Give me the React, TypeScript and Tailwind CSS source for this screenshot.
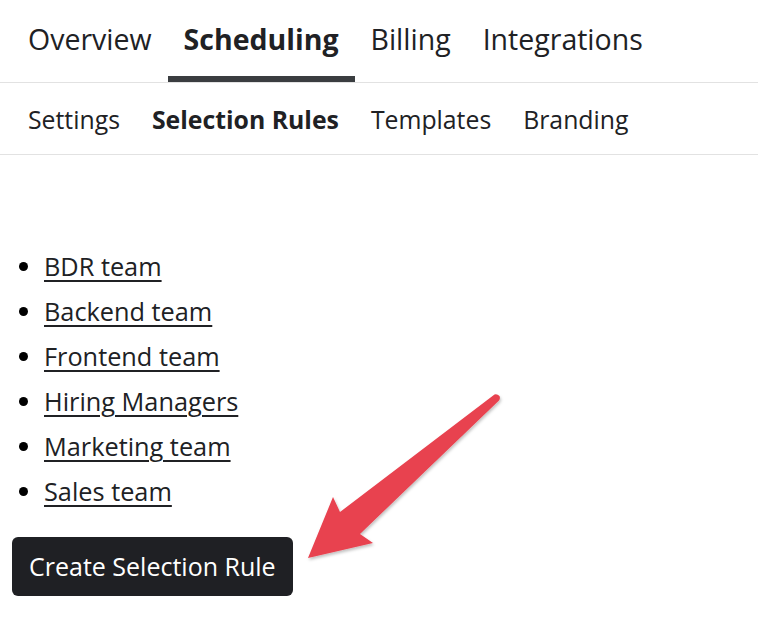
import React from "react";

const topTabs = ["Overview", "Scheduling", "Billing", "Integrations"];
const subTabs = ["Settings", "Selection Rules", "Templates", "Branding"];
const rules = ["BDR team", "Backend team", "Frontend team", "Hiring Managers", "Marketing team", "Sales team"];

export default function App() {
  return (
    <div
      className="relative h-[626px] w-[758px] overflow-hidden bg-white text-[#202124]"
      style={{ fontFamily: "'Open Sans', 'Noto Sans', sans-serif" }}
    >
      {/* main tabs */}
      <div className="flex h-[83px] border-b border-[#e2e2e2] px-3">
        {topTabs.map((t) => {
          const active = t === "Scheduling";
          return (
            <div
              key={t}
              className={
                "flex h-full items-start px-4 pt-[19px] text-[28.5px] leading-[40px] " +
                (active ? "border-b-[6px] border-[#3a3d40] font-bold text-[28.3px]" : "")
              }
            >
              {t}
            </div>
          );
        })}
      </div>

      {/* sub tabs */}
      <div className="flex h-[72px] items-center border-b border-[#e2e2e2] px-3">
        {subTabs.map((t) => (
          <div
            key={t}
            className={"px-4 text-[24.8px] leading-[32px] " + (t === "Selection Rules" ? "font-bold" : "")}
          >
            {t}
          </div>
        ))}
      </div>

      <div className="px-3 pt-[89px]">
        <ul className="list-disc pl-8 text-[25.3px]">
          {rules.map((r) => (
            <li key={r} className="h-[45px] leading-[45px] marker:text-black">
              <a href="#" className="underline underline-offset-[4px] decoration-[2px]">
                {r}
              </a>
            </li>
          ))}
        </ul>
        <button className="mt-[23px] h-[59px] rounded-[6px] bg-[#1f2024] px-[17px] text-[25px] text-white">
          Create Selection Rule
        </button>
      </div>

      {/* annotation arrow */}
      <svg className="pointer-events-none absolute left-0 top-0" width="758" height="626" viewBox="0 0 758 626">
        <defs>
          <filter id="sh" x="-20%" y="-20%" width="140%" height="140%">
            <feDropShadow dx="1" dy="2" stdDeviation="1.5" floodColor="#000" floodOpacity="0.25" />
          </filter>
        </defs>
        <path
          d="M494.5 394.5 Q497 393.5 499.5 396 Q500.5 398.5 499 400.5 L360 534 L373 543 L308 558 L333 497 L340 512 Z"
          fill="#e8424f"
          filter="url(#sh)"
        />
      </svg>
    </div>
  );
}
